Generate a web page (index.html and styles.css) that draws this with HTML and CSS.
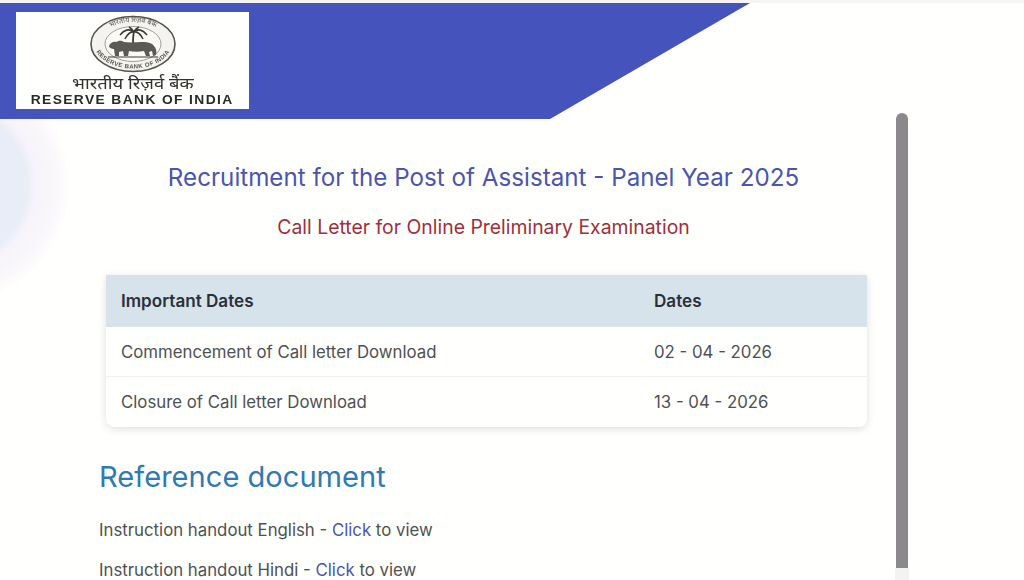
FILE: index.html
```html
<!DOCTYPE html>
<html lang="en">
<head>
    <meta charset="UTF-8">
    <meta name="viewport" content="width=device-width, initial-scale=1.0">
    <title>Recruitment for the Post of Assistant - Panel Year 2025</title>
    <link rel="stylesheet" href="styles.css">
</head>
<body>
    <!-- Background shape on the left -->
    <div class="bg-circle"></div>

    <!-- Header -->
    <header class="header">
        <div class="logo">
            <svg class="emblem" viewBox="0 0 88 58" width="88" height="58">
                <ellipse cx="44" cy="29" rx="42" ry="27.5" fill="#f4f3ef" stroke="#55534e" stroke-width="1.6"/>
                <ellipse cx="44" cy="29" rx="28" ry="17.5" fill="#fbfaf7" stroke="#8a8880" stroke-width="0.8"/>
                <defs>
                    <path id="arcTop" d="M9 30A35 23 0 0 1 79 30"/>
                    <path id="arcBottom" d="M5 28A39 25.5 0 0 0 83 28"/>
                </defs>
                <text class="emblem-text-hi"><textPath href="#arcTop" startOffset="50%" text-anchor="middle">भारतीय रिज़र्व बैंक</textPath></text>
                <text class="emblem-text"><textPath href="#arcBottom" startOffset="50%" text-anchor="middle">RESERVE BANK OF INDIA</textPath></text>
                <!-- palm -->
                <path d="M44 30C44 25 44 20 45 17" fill="none" stroke="#3c3a36" stroke-width="1.8"/>
                <path d="M45 17C40 13 35 15 31 20M45 17C41 16 38 20 36 24M45 17C49 13 54 15 58 20M45 17C49 16 52 20 54 24M45 17C43 14 42 13 40 12M45 17C46 14 48 13 50 12" fill="none" stroke="#3c3a36" stroke-width="1.6"/>
                <!-- tiger -->
                <path d="M20 31c1-3 4-5 8-4 2-2 5-1 7 0 6 1 14 0 20 0 4 0 8 1 10 4 2 2 3 5 2 9l-3 1-1-5-3 1 1 4h-4l-2-5c-5 1-10 1-15 0l-1 5h-4l-1-5-4 1v4h-4l-1-7c-2 0-5-1-5-3z" fill="#5c5a55"/>
                <path d="M19 42h50" stroke="#3c3a36" stroke-width="1.2"/>
            </svg>
            <div class="logo-hindi">भारतीय रिज़र्व बैंक</div>
            <div class="logo-english">RESERVE BANK OF INDIA</div>
        </div>
    </header>

    <!-- Scrollbar -->
    <div class="scroll-thumb"></div>
    <div class="scroll-end"></div>

    <!-- Main content -->
    <main class="content">
        <h1 class="title">Recruitment for the Post of Assistant - Panel Year 2025</h1>
        <h2 class="subtitle">Call Letter for Online Preliminary Examination</h2>

        <div class="dates-card">
            <div class="dates-row dates-head">
                <div>Important Dates</div>
                <div>Dates</div>
            </div>
            <div class="dates-row">
                <div>Commencement of Call letter Download</div>
                <div>02 - 04 - 2026</div>
            </div>
            <div class="dates-row dates-last">
                <div>Closure of Call letter Download</div>
                <div>13 - 04 - 2026</div>
            </div>
        </div>

        <h3 class="ref-heading">Reference document</h3>
        <p class="ref-line">Instruction handout English - <a href="#">Click</a> to view</p>
        <p class="ref-line">Instruction handout Hindi - <a href="#">Click</a> to view</p>
    </main>
</body>
</html>
```

FILE: styles.css
```css
/* General Styles */
body {
    margin: 0;
    position: relative;
    height: 580px;
    overflow: hidden;
    font-family: Inter, "Liberation Sans", sans-serif;
    background: linear-gradient(#f5f4f2 3px, #fffffd 3px);
    color: #4e5054;
}

/* Faint circle on the left edge */
.bg-circle {
    position: absolute;
    top: 65px;
    left: -170px;
    width: 240px;
    height: 240px;
    border-radius: 50%;
    background: radial-gradient(circle closest-side, #e9edf7 0, #e9edf7 64%, #f6f3fa 71%, #fbf8fb 90%, #fffffd 100%);
}

/* Header */
.header {
    position: relative;
    height: 116px;
    margin-top: 3px;
    padding: 9px 0 0 16px;
    box-sizing: border-box;
    background-color: #4553bd;
    clip-path: polygon(0 0, 750px 0, 550px 100%, 0 100%);
}

.logo {
    width: 233px;
    height: 97px;
    background: #fffffd;
    display: flex;
    flex-direction: column;
    align-items: center;
    padding-top: 3px;
    box-sizing: border-box;
    filter: blur(0.4px);
}

.emblem {
    display: block;
    flex: none;
}

.emblem-text {
    font-family: "Liberation Sans", sans-serif;
    font-size: 6px;
    font-weight: bold;
    letter-spacing: 0.4px;
    fill: #55534e;
}

.emblem-text-hi {
    font-family: "Noto Sans", sans-serif;
    font-size: 7px;
    fill: #55534e;
}

.logo-hindi {
    margin-top: 1px;
    font-family: "Noto Sans", sans-serif;
    font-size: 16px;
    line-height: 18px;
    transform: scaleX(1.15);
    color: #33312d;
}

.logo-english {
    margin-top: 2px;
    font-family: "Liberation Sans", sans-serif;
    font-size: 12px;
    line-height: 13px;
    font-weight: bold;
    letter-spacing: 1.2px;
    white-space: nowrap;
    transform: scaleX(1.15);
    color: #2b2a27;
}

/* Scrollbar */
.scroll-thumb {
    position: absolute;
    top: 113px;
    left: 896px;
    width: 12px;
    height: 455px;
    background-color: #8b898b;
    border-radius: 6px 6px 0 0;
}

.scroll-end {
    position: absolute;
    top: 568px;
    left: 895px;
    width: 14px;
    height: 12px;
    background-color: #f3f3f2;
}

/* Content */
.content {
    position: relative;
    width: 769px;
    margin-left: 99px;
}

.title {
    margin: 43px 0 0;
    text-align: center;
    font-size: 24.2px;
    line-height: 32px;
    font-weight: 400;
    color: #4a55b0;
}

.subtitle {
    margin: 21px 0 0;
    text-align: center;
    font-size: 19.4px;
    line-height: 24px;
    font-weight: 400;
    color: #9f2f3a;
}

/* Dates table */
.dates-card {
    margin: 36px 0 0 7px;
    width: 761px;
    border-radius: 0 0 8px 8px;
    box-shadow: 0 2px 8px rgba(0, 0, 0, 0.13);
    background: #fffffd;
    font-size: 16.8px;
}

.dates-row {
    display: grid;
    grid-template-columns: 533px 1fr;
    align-items: center;
    height: 50px;
    padding-left: 15px;
    border-bottom: 1px solid #f0f0ee;
    box-sizing: border-box;
}

.dates-head {
    height: 52px;
    padding-bottom: 2px;
    border-bottom: none;
    background-color: #d7e3ea;
    font-size: 17.1px;
    font-weight: 600;
    color: #2b3038;
}

.dates-last {
    border-bottom: none;
}

/* Reference documents */
.ref-heading {
    margin: 31px 0 24px;
    font-size: 29.1px;
    line-height: 38px;
    font-weight: 400;
    color: #2f7ab5;
}

.ref-line {
    margin: 20px 0 0;
    font-size: 16.8px;
    line-height: 20px;
}

.ref-line a {
    color: #4a55b0;
    text-decoration: none;
}
```
